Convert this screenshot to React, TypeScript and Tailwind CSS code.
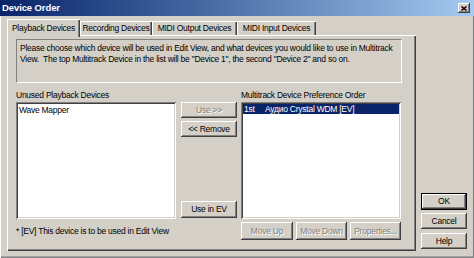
import React from "react";

const FONT = "[font-family:'Liberation_Sans',Arial,sans-serif]";

const raised =
  "bg-[#d4d0c8] shadow-[inset_-1px_-1px_#404040,inset_1px_1px_#ffffff,inset_-2px_-2px_#808080,inset_2px_2px_#d4d0c8]";

const sunken =
  "bg-white shadow-[inset_1px_1px_#808080,inset_-1px_-1px_#ffffff,inset_2px_2px_#404040,inset_-2px_-2px_#d4d0c8]";

type BtnProps = {
  label: string;
  className: string;
  disabled?: boolean;
  isDefault?: boolean;
};

function Button({ label, className, disabled, isDefault }: BtnProps) {
  const text = disabled
    ? "text-[#808080] [text-shadow:1px_1px_0_#ffffff]"
    : "text-black";
  if (isDefault) {
    return (
      <div className={`border border-black ${className}`}>
        <div
          className={`flex h-full w-full items-center justify-center ${raised} ${text}`}
        >
          {label}
        </div>
      </div>
    );
  }
  return (
    <div className={`flex items-center justify-center ${raised} ${text} ${className}`}>
      {label}
    </div>
  );
}

function TitleBar() {
  return (
    <div className="flex h-[16px] items-center justify-between bg-linear-to-r from-[#0a246a] to-[#a6caf0] pl-[2px] pr-[4px]">
      <span className="text-[9.5px] font-bold leading-none tracking-[-0.1px] text-white">Device Order</span>
      <div className={`flex h-[10px] w-[12px] items-center justify-center ${raised}`}>
        <svg width="6" height="5" viewBox="0 0 6 5">
          <path d="M0.5 0.5 L5.5 4.5 M5.5 0.5 L0.5 4.5" stroke="#000" strokeWidth="1.4" />
        </svg>
      </div>
    </div>
  );
}

function Tabs() {
  const tabs = [
    { label: "Recording Devices", w: "w-[72px]" },
    { label: "MIDI Output Devices", w: "w-[85px]" },
    { label: "MIDI Input Devices", w: "w-[79px]" },
  ];
  return (
    <div className="flex h-[16px] items-start">
      <div className="relative z-10 -mb-[2px] flex h-[18px] w-[73px] items-start justify-center bg-[#d4d0c8] pt-[4px] shadow-[inset_1px_1px_#ffffff,inset_-1px_0_#404040,inset_-2px_0_#808080]">
        Playback Devices
      </div>
      {tabs.map((t) => (
        <div
          key={t.label}
          className={`mt-[2px] flex h-[14px] ${t.w} items-start justify-center pt-[2px] shadow-[inset_1px_1px_#ffffff,inset_-1px_0_#404040,inset_-2px_0_#808080]`}
        >
          {t.label}
        </div>
      ))}
    </div>
  );
}

function Panel() {
  return (
    <div className="flex h-[216px] w-[409px] flex-col pl-[9px] pt-[4px] shadow-[inset_1px_1px_#ffffff,inset_-1px_-1px_#404040,inset_-2px_-2px_#808080]">
      <div className="h-[44px] w-[386px] border border-b-white border-l-[#808080] border-r-white border-t-[#808080] pl-[3px] pt-[3px]">
        <p>
          Please choose which device will be used in Edit View, and what devices you would like to use in Multitrack
        </p>
        <p>View.&nbsp; The top Multitrack Device in the list will be "Device 1", the second "Device 2" and so on.</p>
      </div>

      <div className="mt-[7px] flex">
        <div className="flex w-[160px] flex-col">
          <div className="h-[12px]">Unused Playback Devices</div>
          <div className={`h-[117px] p-[2px] ${sunken}`}>
            <div className="pl-[1px] pt-[1px]">Wave Mapper</div>
          </div>
        </div>

        <div className="ml-[5px] flex w-[56px] flex-col pt-[12px]">
          <Button label="Use >>" disabled className="h-[16px] w-[56px]" />
          <Button label="<< Remove" className="mt-[3px] h-[16px] w-[56px]" />
          <Button label="Use in EV" className="mb-[1px] mt-auto h-[17px] w-[56px]" />
        </div>

        <div className="ml-[4px] flex w-[160px] flex-col">
          <div className="h-[12px]">Multitrack Device Preference Order</div>
          <div className={`h-[117px] p-[2px] ${sunken}`}>
            <div className="flex h-[10px] items-center bg-[#0a246a] pl-[1px] text-white">
              <span className="w-[21px]">1st</span>
              <span>Аудио Crystal WDM [EV]</span>
            </div>
          </div>
        </div>
      </div>

      <div className="mt-[3px] flex items-center">
        <div className="w-[225px]">* [EV] This device is to be used in Edit View</div>
        <div className="flex gap-[3px]">
          <Button label="Move Up" disabled className="h-[18px] w-[52px]" />
          <Button label="Move Down" disabled className="h-[18px] w-[51px]" />
          <Button label="Properties..." disabled className="h-[18px] w-[51px]" />
        </div>
      </div>
    </div>
  );
}

export default function App() {
  return (
    <div
      className={`flex h-[258px] w-[474px] flex-col overflow-hidden whitespace-nowrap bg-[#d4d0c8] text-[8.5px] leading-[11px] tracking-[-0.25px] text-black ${FONT} shadow-[inset_1px_0_#ffffff,inset_-1px_-1px_#808080,inset_0_-2px_#a8a49c]`}
    >
      <TitleBar />
      <div className="flex pl-[7px] pt-[3px]">
        <div className="flex flex-col">
          <Tabs />
          <Panel />
        </div>
        <div className="ml-[5px] mt-[174px] flex flex-col">
          <Button label="OK" isDefault className="h-[17px] w-[46px]" />
          <Button label="Cancel" className="mt-[3px] h-[16px] w-[46px]" />
          <Button label="Help" className="mt-[4px] h-[16px] w-[46px]" />
        </div>
      </div>
    </div>
  );
}
